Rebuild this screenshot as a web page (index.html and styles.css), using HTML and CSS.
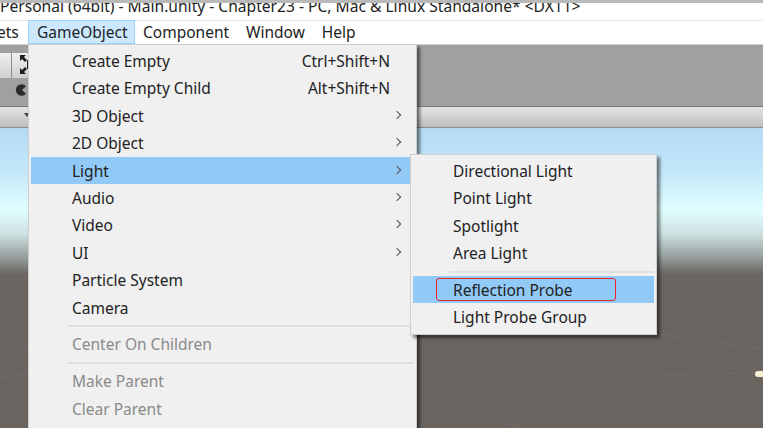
FILE: index.html
```html
<!DOCTYPE html>
<html lang="en">
<head>
    <meta charset="UTF-8">
    <title>Unity - GameObject menu</title>
    <link rel="stylesheet" href="styles.css">
</head>
<body>
    <div class="title-bar"><span class="title-text">Personal (64bit) - Main.unity - Chapter23 - PC, Mac &amp; Linux Standalone* &lt;DX11&gt;</span></div>

    <nav class="menu-bar">
        <span class="menu-title menu-assets">ets</span>
        <span class="menu-title menu-open">GameObject</span>
        <span class="menu-title">Component</span>
        <span class="menu-title">Window</span>
        <span class="menu-title">Help</span>
    </nav>

    <div class="toolbar">
        <div class="tool-row">
            <div class="tool-button tool-left"></div>
            <div class="tool-button">
                <svg class="tool-icon" width="16" height="25" viewBox="0 0 16 25">
                    <path d="M8 2h6l-2 2 3 3-2 2-3-3-2 2zM8 21v-6l2 2 3-3 2 2-3 3 2 2z" fill="#1e1e1e"/>
                    <path d="M15.5 7v9" stroke="#1e1e1e" stroke-width="1"/>
                </svg>
            </div>
        </div>
        <div class="tab-row">
            <svg width="12" height="12" viewBox="0 0 12 12">
                <path d="M11 2.2A5.8 5.8 0 1 0 11 9.8L7 6z" fill="#2b2b2b"/>
            </svg>
        </div>
    </div>

    <div class="scene-bar"><span class="scene-arrow"></span></div>

    <div class="scene">
        <div class="sky"></div>
        <div class="ground">
            <svg class="ground-lines" width="763" height="155" viewBox="0 0 763 155">
                <path d="M0 29L28 22M657 101L755 99M0 103L28 100M520 40L763 75M0 75L28 72M430 115L520 155" stroke="#726c69" stroke-width="1" fill="none"/>
            </svg>
        </div>
        <div class="scene-light"></div>
    </div>

    <div class="dropdown main-menu">
        <div class="item"><span>Create Empty</span><span>Ctrl+Shift+N</span></div>
        <div class="item"><span>Create Empty Child</span><span>Alt+Shift+N</span></div>
        <div class="item has-sub"><span>3D Object</span></div>
        <div class="item has-sub"><span>2D Object</span></div>
        <div class="item has-sub selected"><span>Light</span></div>
        <div class="item has-sub"><span>Audio</span></div>
        <div class="item has-sub"><span>Video</span></div>
        <div class="item has-sub"><span>UI</span></div>
        <div class="item"><span>Particle System</span></div>
        <div class="item"><span>Camera</span></div>
        <div class="separator"></div>
        <div class="item disabled"><span>Center On Children</span></div>
        <div class="separator"></div>
        <div class="item disabled"><span>Make Parent</span></div>
        <div class="item disabled"><span>Clear Parent</span></div>
    </div>

    <div class="dropdown sub-menu">
        <div class="item"><span>Directional Light</span></div>
        <div class="item"><span>Point Light</span></div>
        <div class="item"><span>Spotlight</span></div>
        <div class="item"><span>Area Light</span></div>
        <div class="separator"></div>
        <div class="item selected"><span class="marked">Reflection Probe</span></div>
        <div class="item"><span>Light Probe Group</span></div>
    </div>
</body>
</html>
```

FILE: styles.css
```css
/* Unity editor with the GameObject menu open */
:root {
    --menu-bg: #f0f0f0;
    --menu-border: #cfcfcf;
    --menu-select: #91c9f7;
    --menu-text: #222;
    --menu-disabled: #8a8a8a;
}

html, body {
    height: 100%;
}

body {
    margin: 0;
    overflow: hidden;
    position: relative;
    display: flex;
    flex-direction: column;
    font-family: "Noto Sans", "Open Sans", sans-serif;
    font-size: 15.5px;
    color: var(--menu-text);
    background: #fff;
}

.title-bar {
    box-sizing: border-box;
    flex: none;
    height: 21px;
    overflow: hidden;
    white-space: nowrap;
    font-size: 15.6px;
    line-height: 13px;
    background: #fff;
    border-top: 3px solid #b9b9b9;
    border-bottom: 1px solid #e6e6e6;
}

.title-text {
    display: block;
    margin-top: -3px;
}

.menu-bar {
    box-sizing: border-box;
    flex: none;
    height: 24px;
    display: flex;
    background: #fff;
    border-bottom: 1px solid #d0d0d0;
}

.menu-title {
    padding: 0 8px;
    line-height: 22px;
    margin-right: 1px;
}

.menu-assets {
    margin-left: -3px;
    width: 20px;
    padding: 0;
    margin-right: 11px;
}

.menu-open {
    box-sizing: border-box;
    width: 107px;
    margin-top: -1px;
    margin-right: 0;
    background: #cce8ff;
    border: 1px solid #99d1ff;
}

.toolbar {
    box-sizing: border-box;
    flex: none;
    height: 62px;
    background: #a0a0a0;
    border-bottom: 1px solid #7a7a7a;
}

.tool-row {
    display: flex;
    height: 33px;
    padding-top: 8px;
    box-sizing: border-box;
}

.tool-button {
    width: 17px;
    height: 25px;
    background: linear-gradient(#f0f0f0, #cfcfcf);
    border-right: 1px solid #8c8c8c;
}

.tool-left {
    width: 11px;
}

.tool-icon {
    display: block;
}

.tab-row {
    height: 28px;
    display: flex;
    align-items: center;
    padding: 0 0 4px 15px;
    box-sizing: border-box;
}

.scene-bar {
    box-sizing: border-box;
    flex: none;
    height: 21px;
    position: relative;
    background: linear-gradient(#e4e4e4, #bdbdbd);
    border-bottom: 1px solid #8d8d8d;
}

.scene-arrow {
    position: absolute;
    left: 24px;
    top: 6px;
    border: 3px solid transparent;
    border-top: 4px solid #444;
}

.scene {
    flex: 1;
    min-height: 0;
    display: flex;
    flex-direction: column;
    position: relative;
}

.sky {
    flex: none;
    height: 146px;
    background: linear-gradient(#b4daf3, #c4e7f9 30%, #e0feff 56%, #cfe2e2 72%, #96a09f 88%, #6c6663);
}

.ground {
    flex: 1;
    overflow: hidden;
    background: #6b6562;
}

.ground-lines {
    display: block;
}

.scene-light {
    position: absolute;
    right: 0;
    top: 243px;
    width: 8px;
    height: 6px;
    border-radius: 3px 0 0 3px;
    background: #f8efd0;
}

/* menus lie over the editor */
.dropdown {
    position: absolute;
    box-sizing: border-box;
    background: var(--menu-bg);
    border: 1px solid var(--menu-border);
    padding: 2px;
    box-shadow: 3px 3px 3px rgba(0, 0, 0, 0.5);
}

.main-menu {
    left: 28px;
    top: 44px;
    width: 389px;
    height: 400px;
}

.sub-menu {
    left: 410px;
    top: 154px;
    width: 247px;
    height: 181px;
}

.item {
    height: 27.4px;
    line-height: 29px;
    padding: 0 24px 0 41px;
    display: flex;
    justify-content: space-between;
    position: relative;
}

.sub-menu .item {
    padding-left: 40px;
}

.item.selected {
    background: var(--menu-select);
}

.item.disabled {
    color: var(--menu-disabled);
}

.has-sub::after {
    content: "";
    position: absolute;
    right: 14px;
    top: 10px;
    width: 5px;
    height: 5px;
    border-top: 1.5px solid #555;
    border-right: 1.5px solid #555;
    transform: rotate(45deg);
}

.separator {
    height: 2px;
    margin: 4px 0 3.5px 36px;
    background: #e0e0e0;
}

.marked {
    position: relative;
}

.marked::before {
    content: "";
    position: absolute;
    left: -17px;
    top: 2px;
    width: 178px;
    height: 21px;
    border: 1px solid #e8212b;
    border-radius: 3px;
}
```
